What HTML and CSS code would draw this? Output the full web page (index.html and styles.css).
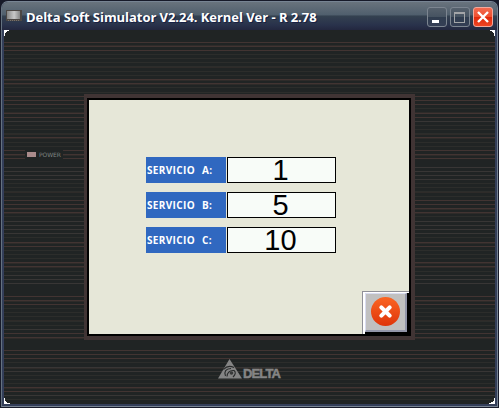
FILE: index.html
```html
<!DOCTYPE html>
<html lang="es">
<head>
<meta charset="utf-8">
<title>Delta Soft Simulator</title>
<link rel="stylesheet" href="styles.css">
</head>
<body>
<div class="window">
  <header class="titlebar">
    <svg class="app-icon" width="16" height="12" viewBox="0 0 16 12">
      <defs><linearGradient id="lcd"><stop offset="0" stop-color="#858585"/><stop offset=".55" stop-color="#c8c8c8"/><stop offset="1" stop-color="#858585"/></linearGradient></defs>
      <path d="M0 0h16v11H0z" fill="#4c4744"/><path d="M1 1h13v8H1z" fill="url(#lcd)"/><path d="M2 10.5h12" stroke="#77716c" stroke-dasharray="1 1"/>
    </svg>
    <h1 class="title">Delta Soft Simulator V2.24. Kernel Ver - R 2.78</h1>
    <div class="controls">
      <span class="control"><svg width="18" height="18"><path d="M4 12h7v3H4z" fill="#fff"/></svg></span>
      <span class="control"><svg width="18" height="18"><path d="M3 4h11v11H3zM4 6v8h9V6z" fill="#a3a5a8" fill-rule="evenodd"/></svg></span>
      <span class="control close"><svg width="18" height="18"><path d="M4 4l10 10M14 4l-10 10" stroke="#fff" stroke-width="2.4"/></svg></span>
    </div>
  </header>
  <main class="device">
    <svg class="stripes" width="491" height="374" viewBox="4 30 491 374" preserveAspectRatio="none" shape-rendering="crispEdges">
      <path stroke="#2c2d2b" d="M4 54.5H495M4 58.5H495M4 62.5H495M4 66.5H495M4 71.5H495M4 75.5H495M4 87.5H495M4 92.5H495M4 108.5H495M4 125.5H495M4 129.5H495M4 133.5H495M4 142.5H495M4 146.5H495M4 183.5H495M4 187.5H495M4 191.5H495M4 196.5H495M4 216.5H495M4 237.5H495M4 250.5H495M4 254.5H495M4 258.5H495M4 271.5H495M4 308.5H495M4 312.5H495M4 316.5H495M4 321.5H495M4 325.5H495M4 362.5H495M4 375.5H495M4 379.5H495M4 383.5H495M4 399.5H495"/>
      <path stroke="#2e2b29" d="M4 45.5H495M4 67.5H495M4 80.5H495M4 84.5H495M4 112.5H495M4 134.5H495M4 138.5H495M4 155.5H495M4 192.5H495M4 209.5H495M4 213.5H495M4 243.5H495M4 263.5H495M4 267.5H495M4 301.5H495M4 320.5H495M4 338.5H495M4 368.5H495M4 388.5H495"/>
      <path stroke="#423432" d="M4 42.5H495M4 46.5H495M4 50.5H495M4 79.5H495M4 83.5H495M4 96.5H495M4 100.5H495M4 104.5H495M4 113.5H495M4 117.5H495M4 137.5H495M4 150.5H495M4 154.5H495M4 158.5H495M4 200.5H495M4 204.5H495M4 208.5H495M4 212.5H495M4 242.5H495M4 246.5H495M4 262.5H495M4 266.5H495M4 296.5H495M4 300.5H495M4 304.5H495M4 333.5H495M4 337.5H495M4 350.5H495M4 354.5H495M4 358.5H495M4 387.5H495M4 391.5H495"/>
      <path stroke="#383635" d="M4 121.5H495M4 167.5H495M4 171.5H495M4 175.5H495M4 179.5H495M4 221.5H495M4 225.5H495M4 229.5H495M4 233.5H495M4 275.5H495M4 279.5H495M4 283.5H495M4 329.5H495M4 367.5H495M4 371.5H495M4 395.5H495"/>
      <path fill="#fff" d="M4 30h5v1H7v1H6v1H5v3H4zM495 30h-5v1h2v1h1v1h1v3h1zM4 404h6v-1H7v-1H6v-1H5v-3H4zM495 404h-6v-1h2v-1h2v-1h1v-3h1z"/>
    </svg>
    <div class="power"><i class="led"></i><span>POWER</span></div>
    <section class="screen">
      <div class="rows">
        <div class="row"><span class="label">SERVICIO<span>A:</span></span><span class="value">1</span></div>
        <div class="row"><span class="label">SERVICIO<span>B:</span></span><span class="value">5</span></div>
        <div class="row"><span class="label">SERVICIO<span>C:</span></span><span class="value">10</span></div>
      </div>
      <div class="exit">
        <svg width="28" height="28" viewBox="0 0 28 28">
          <defs><linearGradient id="red" x2="0" y2="1"><stop stop-color="#fa6523"/><stop offset="1" stop-color="#df350a"/></linearGradient></defs>
          <circle cx="14" cy="14" r="14" fill="url(#red)"/><path d="M10 10l8 8M18 10l-8 8" stroke="#fff" stroke-width="4" stroke-linecap="round"/>
        </svg>
      </div>
    </section>
    <div class="brand">
      <svg width="24" height="20" viewBox="0 0 24 20"><path d="M11.5 0L24 19.5H0z" fill="#858585"/><path d="M5.5 10.5Q10 5.500 16 8.500M7.500 17Q5 10 13 9.500M9 17.500Q9.500 11 16 11.500Q19 14 15 18" fill="none" stroke="#292b2b" stroke-width="1.100"/><circle cx="13.500" cy="14" r="1.800" fill="#383a3a"/></svg>
      <span>DELTA</span>
    </div>
  </main>
</div>
</body>
</html>
```
FILE: styles.css
```css
* { box-sizing: border-box; }
html { background: #171a29; }
body { margin: 0; width: 499px; height: 408px; overflow: hidden; }
svg { display: block; }
.window {
  width: 497px; height: 406px; margin: 1px 0 0 1px; padding: 0 2px 2px;
  background: #333e59;
  border: 1px solid #778493; border-left-color: #657280;
  border-radius: 7px 7px 0 0;
}
.titlebar {
  height: 28px; margin: 0 -2px; padding: 0 4px;
  display: flex; align-items: center;
  border-radius: 6px 6px 0 0;
  background: linear-gradient(#69737d, #505f6d 46%, #344150 50%, #29324b 82%, #23273f);
}
.app-icon { margin-top: 0; }
.title {
  margin: 1px 0 0 4px; flex: 1; white-space: nowrap;
  font: bold 13px/18px "Open Sans", sans-serif; letter-spacing: -.05px;
  color: #fff; text-shadow: 1px 1px 0 #172044;
}
.controls { display: flex; gap: 3px; margin-top: 1px; }
.control {
  width: 20px; height: 20px; border: 1px solid #7c8590; border-radius: 3px;
  background: linear-gradient(#56616d, #465361 49%, #303d4f 50%, #343e55);
}
.close { background: linear-gradient(#f26a50, #ef4f2f 48%, #df280a 50%, #f04423); border-color: #f2a99d; }
.device {
  position: relative; height: 374px; background: #202424;
  display: flex; flex-direction: column; align-items: center;
}
.stripes { position: absolute; left: 0; top: 0; width: 100%; height: 374px; }
.power {
  position: absolute; left: 21px; top: 119px; height: 11px; padding: 0 2px;
  display: flex; align-items: center; gap: 3px; background: #202424;
  font: 6px/11px "DejaVu Sans", sans-serif; letter-spacing: -.1px; color: #7e8581;
}
.led { width: 9px; height: 5px; background: #a98b8b; }
.screen {
  width: 331px; height: 246px; margin-top: 64px; position: relative;
  border: 4px solid #403434; border-left-width: 3px;
  background: #e6e7d8; box-shadow: inset 0 0 0 2px #000;
  display: flex; flex-direction: column; justify-content: space-between; align-items: flex-end;
}
.rows { display: flex; flex-direction: column; gap: 9px; margin: 59px 75px 0 0; }
.row { display: flex; gap: 1px; }
.label {
  width: 80px; height: 26px; padding-left: 1px; display: flex; gap: 7px;
  background: #3068c0; color: #fff;
  font: bold 10px/26px "Open Sans", sans-serif; letter-spacing: .35px;
}
.value {
  width: 109px; height: 26px; padding-right: 2px; border: 1px solid #000; background: #f8fcf8; color: #000;
  font: 29px/25px "Liberation Sans", sans-serif; text-align: center;
}
.exit {
  width: 47px; height: 43px; margin: 0 2px 2px 0; padding: 2px 2px 2px 3px;
  background: #000; box-shadow: inset 1px 1px #909098, inset 3px 2px #fff;
}
.exit svg {
  width: 42px; height: 39px; padding: 3px 5px 4px; background: #c0c0c0;
  border: 1px solid #d9dcf0; border-right: 2px solid #9295a8; border-bottom: 2px solid #9295a8;
}
.brand {
  position: relative; margin: 19px 0 0 -1px; display: flex; gap: 1px; align-items: flex-end;
  color: #858585;
}
.brand span { font: bold 13px/11px "Liberation Sans", sans-serif; letter-spacing: -.9px; -webkit-text-stroke: .5px #858585; }
```
